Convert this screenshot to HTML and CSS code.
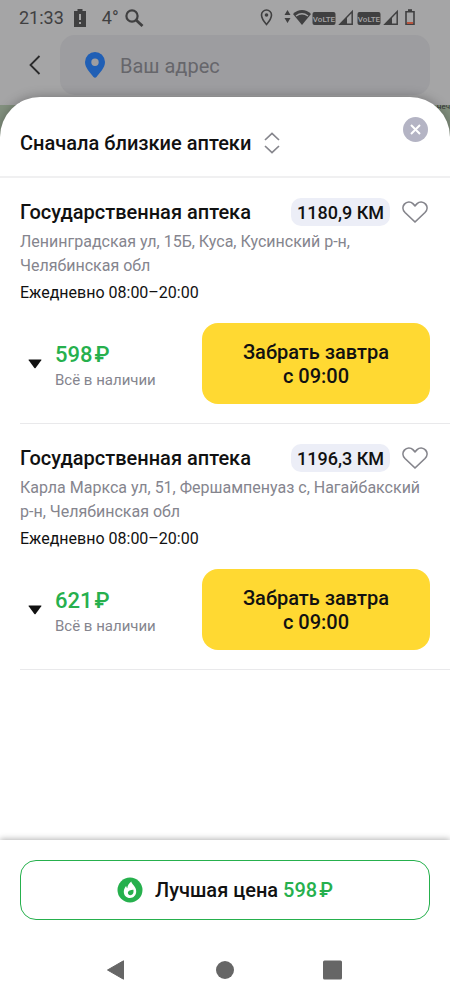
FILE: index.html
```html
<!DOCTYPE html>
<html lang="ru">
<head>
<meta charset="utf-8">
<meta name="viewport" content="width=device-width, initial-scale=1">
<title>Выбор аптеки</title>
<link rel="stylesheet" href="styles.css">
</head>
<body>
<div class="screen">
  <header class="backdrop">
    <div class="status">
      <span class="status-time">21:33</span>
      <svg class="status-alert" width="12" height="18" viewBox="0 0 12 18"><path fill="#404041" d="M3.500 0h5v2H12v16H0V2h3.500z"/><path stroke="#a5a5a6" stroke-width="2" d="M6 5v6M6 13v2"/></svg>
      <span class="status-temp">4°</span>
      <svg class="status-search" width="19" height="18" viewBox="0 0 19 18" fill="none" stroke="#404041"><circle cx="7" cy="7" r="5.600" stroke-width="2.200"/><path d="M11 11l6.500 6" stroke-width="2.800"/></svg>
      <svg class="status-tray" width="156" height="18" viewBox="0 0 156 18" fill="none" stroke="#404041">
        <path stroke-width="1.600" d="M6.500 15.500C3 11.500 1.500 9 1.500 6a5 5 0 0 1 10 0C11.500 9 10 11.500 6.500 15.500z"/><circle cx="6.500" cy="6" r="1.800" fill="#404041" stroke="none"/>
        <path fill="#404041" stroke="none" d="M27.500 1l3 5h-6zM27.500 14l3-5h-6z"/>
        <path fill="#404041" stroke="none" d="M33 5C38 -.2 46 -.2 51 5L42 16z"/><path stroke="#a5a5a6" stroke-width="1.300" d="M36 7c4-3 8-3 12 0"/>
        <rect x="52.500" y="3" width="23" height="13" rx="2" fill="#404041" stroke="none"/><text class="volte" x="64" y="12.500" text-anchor="middle">VoLTE</text>
        <path stroke-width="1.500" d="M80 15.200L92.200 2.500v12.700z"/><path fill="#404041" stroke="none" d="M79 16l8-8v8z"/>
        <rect x="97.500" y="3" width="23" height="13" rx="2" fill="#404041" stroke="none"/><text class="volte" x="109" y="12.500" text-anchor="middle">VoLTE</text>
        <path stroke-width="1.500" d="M125 15.200L137.200 2.500v12.700z"/><path fill="#404041" stroke="none" d="M124 16l8-8v8z"/>
        <path stroke-width="1.600" d="M146 2.800h8v12.400h-8z"/><path stroke-width="2" d="M148 1.200h4"/><path stroke="#b8553e" stroke-width="2" d="M147 14h6"/>
      </svg>
    </div>
    <div class="search-row">
      <button class="back" type="button" aria-label="Назад"><svg width="12" height="20" viewBox="0 0 12 20" fill="none" stroke="#2a2a2b" stroke-width="1.800"><path d="M10.500 1L1.500 10l9 9"/></svg></button>
      <label class="search">
        <svg width="20" height="26" viewBox="0 0 20 26"><path fill="#205fb5" fill-rule="evenodd" d="M10 0a10 10 0 0 1 10 10c0 6-5 10-8.500 15q-1.500 1.500-3 0C5 20 0 16 0 10A10 10 0 0 1 10 0zm0 6.500a3.700 3.700 0 1 0 0 7.400 3.700 3.700 0 0 0 0-7.400z"/></svg>
        <input type="text" placeholder="Ваш адрес" aria-label="Ваш адрес">
      </label>
    </div>
    <div class="map"><span class="map-label">неч</span></div>
  </header>

  <main class="sheet">
    <div class="sheet-head">
      <button class="sort" type="button">Сначала близкие аптеки
        <svg width="16" height="22" viewBox="0 0 16 22" fill="none" stroke="#85858c" stroke-width="1.700"><path d="M1 8l7-6.500L15 8M1 14l7 6.500L15 14"/></svg>
      </button>
      <button class="close" type="button" aria-label="Закрыть"><svg width="25" height="25" viewBox="0 0 25 25"><circle cx="12.500" cy="12.500" r="12.500" fill="#b4b4c4"/><path d="M8 8l9 9M17 8l-9 9" stroke="#fff" stroke-width="2"/></svg></button>
    </div>

    <article class="card">
      <div class="card-head">
        <h2 class="name">Государственная аптека</h2>
        <span class="distance">1180,9 КМ</span>
        <button class="like" type="button" aria-label="В избранное"><svg width="26" height="22" viewBox="0 0 26 22" fill="none" stroke="#85858c" stroke-width="1.700" stroke-linejoin="round"><path d="M13 21L3 11.500C.5 9 .4 5.400 2.400 3.100c2.500-2.700 6.200-2.700 8.500-.4L13 4.800l2.100-2.100c2.300-2.300 6-2.300 8.500.4 2 2.300 1.900 5.900-.6 8.400z"/></svg></button>
      </div>
      <p class="address">Ленинградская ул, 15Б, Куса, Кусинский р-н, Челябинская обл</p>
      <p class="hours">Ежедневно 08:00–20:00</p>
      <div class="offer">
        <button class="expand" type="button" aria-label="Показать состав"><svg width="14" height="10" viewBox="0 0 14 10"><path fill="#111" d="M1 .5h12q.8 0 .3.700L7.600 9q-.6.600-1.200 0L.7 1.200Q.2.500 1 .5z"/></svg></button>
        <div class="stock"><strong class="price">598<span class="rub">₽</span></strong><span class="avail">Всё в наличии</span></div>
        <button class="pickup" type="button">Забрать завтра<br>с 09:00</button>
      </div>
    </article>

    <article class="card">
      <div class="card-head">
        <h2 class="name">Государственная аптека</h2>
        <span class="distance">1196,3 КМ</span>
        <button class="like" type="button" aria-label="В избранное"><svg width="26" height="22" viewBox="0 0 26 22" fill="none" stroke="#85858c" stroke-width="1.700" stroke-linejoin="round"><path d="M13 21L3 11.500C.5 9 .4 5.400 2.400 3.100c2.500-2.700 6.200-2.700 8.500-.4L13 4.800l2.100-2.100c2.300-2.300 6-2.300 8.500.4 2 2.300 1.900 5.900-.6 8.400z"/></svg></button>
      </div>
      <p class="address">Карла Маркса ул, 51, Фершампенуаз с, Нагайбакский р-н, Челябинская обл</p>
      <p class="hours">Ежедневно 08:00–20:00</p>
      <div class="offer">
        <button class="expand" type="button" aria-label="Показать состав"><svg width="14" height="10" viewBox="0 0 14 10"><path fill="#111" d="M1 .5h12q.8 0 .3.700L7.600 9q-.6.600-1.200 0L.7 1.200Q.2.500 1 .5z"/></svg></button>
        <div class="stock"><strong class="price">621<span class="rub">₽</span></strong><span class="avail">Всё в наличии</span></div>
        <button class="pickup" type="button">Забрать завтра<br>с 09:00</button>
      </div>
    </article>
  </main>

  <footer class="footer">
    <button class="best" type="button">
      <svg width="26" height="26" viewBox="0 0 26 26"><circle cx="13" cy="13" r="12.500" fill="#26b04d"/><path fill="#fff" d="M14.300 4.500c.2 3 4.900 4.500 4.900 9.800 0 4-2.600 6.700-6.200 6.700s-6.200-2.500-6.200-6.300c0-2.400 1.200-4.500 2.300-5.700.2 1 .5 1.700 1.200 2.200.2-2.700 1.700-5 4-6.700z"/><path fill="#26b04d" d="M16.400 12.800c.6 3.300-.9 5.400-3 5.400-1.800 0-2.700-1.200-2.500-2.600.3-2 3.100-2.900 5.500-2.800z"/></svg>
      <span>Лучшая цена <span class="best-price">598<span class="rub">₽</span></span></span>
    </button>
    <nav class="system-nav" aria-label="Система">
      <button type="button" aria-label="Назад"><svg width="20" height="20" viewBox="0 0 20 20"><path fill="#666" stroke="#666" stroke-linejoin="round" d="M16.500.8v18.400L.5 10z"/></svg></button>
      <button type="button" aria-label="Домой"><svg width="20" height="20" viewBox="0 0 20 20"><circle cx="10" cy="10" r="9" fill="#666"/></svg></button>
      <button type="button" aria-label="Недавние"><svg width="20" height="20" viewBox="0 0 20 20"><rect x="0" y=".5" width="19" height="19" rx="1.500" fill="#666"/></svg></button>
    </nav>
  </footer>
</div>
</body>
</html>
```

FILE: styles.css
```css
* { box-sizing: border-box; }
body { margin: 0; background: #fff; color: #111; font-family: Roboto, "Noto Sans", sans-serif; }
button, input { font: inherit; color: inherit; border: 0; padding: 0; background: none; }
button { cursor: pointer; }
svg { display: block; flex: none; }
h2, p { margin: 0; }

.screen { display: flex; flex-direction: column; min-height: 100vh; }

.backdrop { background: #a5a5a6; }
.status { display: flex; align-items: center; height: 35px; padding: 0 34px 0 19px; color: #404041; font-size: 18px; }
.status-alert { margin-left: 10px; }
.status-temp { margin-left: 16px; }
.status-search { margin-left: 6px; }
.status-tray { margin-left: auto; }
.volte { font: 500 8px Roboto, sans-serif; fill: #a5a5a6; stroke: none; }
.search-row { display: flex; padding-right: 20px; height: 70px; }
.back { width: 60px; height: 60px; padding: 0 19px 0 29px; }
.search { flex: 1; display: flex; align-items: center; gap: 15px; height: 60px; padding: 0 25px; border-radius: 15px; background: #9d9da0; }
.search input { flex: 1; min-width: 0; outline: 0; padding-top: 2px; font-size: 20px; }
.search input::placeholder { color: #66666b; opacity: 1; }
.map { position: relative; height: 40px; background: #83917f; }
.map-label { position: absolute; top: -3px; right: 0; color: #333; font-size: 8px; line-height: 10px; }

.sheet { position: relative; flex: 1; margin-top: -48px; border-radius: 40px 40px 0 0; background: #fff; box-shadow: 0 0 12px rgba(0, 0, 0, .3); }
.sheet-head { display: flex; justify-content: space-between; height: 81px; padding: 20px 22px 0 20px; border-bottom: 2px solid #f0f0f1; }
.sort { display: flex; align-items: center; gap: 13px; height: 52px; font-size: 20px; font-weight: 500; }
.close { width: 25px; height: 25px; }

.card { margin-left: 20px; padding: 20px 20px 19px 0; border-bottom: 1px solid #e9e9eb; }
.card-head { display: flex; align-items: center; height: 28px; padding-right: 2px; }
.name { flex: 1; font-size: 20px; font-weight: 500; }
.distance { height: 28px; padding: 0 6px; border-radius: 10px; background: #eceef7; font-size: 18px; font-weight: 500; line-height: 29px; }
.like { margin-left: 12px; }
.address { margin-top: 4px; color: #85858e; font-size: 16px; line-height: 24px; }
.hours { margin-top: 3px; font-size: 16px; line-height: 24px; }
.offer { display: flex; align-items: center; margin-top: 18px; }
.expand { padding: 8px; }
.stock { display: flex; flex: 1; flex-direction: column; padding: 4px 0 0 5px; }
.price { color: #26b04d; font-size: 22px; font-weight: 500; line-height: 28px; }
.rub { margin-left: 2px; }
.avail { color: #85858e; font-size: 15px; line-height: 22px; }
.pickup { width: 228px; height: 81px; border-radius: 16px; background: #ffd932; font-size: 20px; font-weight: 500; line-height: 24px; }

.footer { position: relative; padding: 20px; background: #fff; box-shadow: 0 -1px 6px rgba(0, 0, 0, .3); }
.best { display: flex; align-items: center; justify-content: center; gap: 12px; width: 100%; height: 60px; border: 1px solid #26b04d; border-radius: 16px; font-size: 20px; font-weight: 500; }
.best-price { color: #26b04d; }
.system-nav { display: flex; justify-content: center; gap: 88px; padding-top: 40px; }
```
